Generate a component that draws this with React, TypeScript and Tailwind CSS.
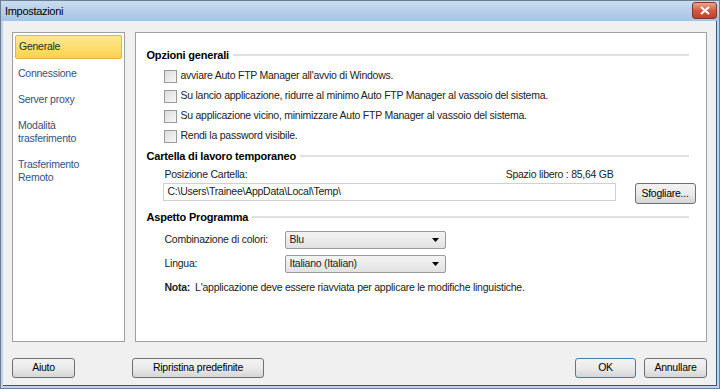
import React from "react";

const font = { fontFamily: '"Liberation Sans", Arial, sans-serif' };

const navItems = [
  { label: "Generale", active: true },
  { label: "Connessione" },
  { label: "Server proxy" },
  { label: "Modalità trasferimento" },
  { label: "Trasferimento Remoto" },
];

const SectionTitle: React.FC<{ title: string }> = ({ title }) => (
  <div className="flex items-center gap-[4px] h-[20px]">
    <span className="font-bold text-[11px] tracking-[-0.2px] text-black">{title}</span>
    <div className="flex-1 h-[2px] bg-[#e0e0e0] mr-[17px]" />
  </div>
);

const Check: React.FC<{ label: string }> = ({ label }) => (
  <div className="flex items-center gap-[4px] h-[20px] pl-[17px]">
    <div className="w-[13px] h-[13px] border border-[#9a9a9a] bg-gradient-to-br from-[#dcdcdc] to-[#f8f8f8]" />
    <span>{label}</span>
  </div>
);

const Button: React.FC<{ label: string; className?: string; focused?: boolean }> = ({
  label,
  className = "",
  focused,
}) => (
  <div
    className={`h-[20px] flex items-center justify-center rounded-[3px] border ${
      focused ? "border-[#3c7fb1]" : "border-[#707070]"
    } bg-gradient-to-b from-[#f2f2f2] via-[#ebebeb] to-[#d5d5d5] text-black ${className}`}
  >
    {label}
  </div>
);

const Select: React.FC<{ value: string }> = ({ value }) => (
  <div className="w-[161px] h-[18px] flex items-center justify-between border border-[#9a9a9a] rounded-[2px] bg-gradient-to-b from-[#f4f4f4] to-[#e2e2e2] pl-[4px] pr-[6px]">
    <span>{value}</span>
    <svg width="7" height="4" viewBox="0 0 7 4">
      <path d="M0 0h7L3.5 4z" fill="#000" />
    </svg>
  </div>
);

export default function App() {
  return (
    <div
      className="w-[720px] h-[389px] flex flex-col bg-[#bcd4ec] border border-[#6b7f94] text-[10.5px] tracking-[-0.25px] text-[#222]"
      style={font}
    >
      <div className="h-[20px] flex items-center justify-between bg-gradient-to-b from-[#cadcf0] to-[#a6c3e4] pl-[4px] pr-[2px]">
        <span className="text-[11px] tracking-[-0.3px] text-black">Impostazioni</span>
        <div className="w-[25px] h-[17px] mb-[2px] rounded-[3px] border border-[#7a3a2e] bg-gradient-to-b from-[#e8a493] via-[#cf5a42] to-[#c0402a] flex items-center justify-center">
          <svg width="10" height="9" viewBox="0 0 10 9">
            <path d="M1 1l8 7M9 1L1 8" stroke="#fff" strokeWidth="2.2" />
          </svg>
        </div>
      </div>
      <div className="flex-1 mx-[2px] mb-[2px] bg-[#f0f0f0] border-r border-b border-[#2e5b78] flex flex-col px-[9px] pt-[11px]">
        <div className="flex gap-[10px] h-[310px]">
          <div className="w-[113px] bg-white border border-[#a0a0a0] p-[2px] flex flex-col">
            {navItems.map((item) => (
              <div
                key={item.label}
                className={
                  item.active
                    ? "h-[24px] flex items-center px-[3px] rounded-[2px] border border-[#e6b53a] bg-gradient-to-b from-[#fde98e] to-[#fbd24e] text-[#2b2b2b] mb-[1px]"
                    : "px-[3px] text-[#34527e] leading-[13px] py-[6.5px] w-[90px]"
                }
              >
                {item.label}
              </div>
            ))}
          </div>
          <div className="w-[575px] bg-white border border-[#a0a0a0] pl-[11px] pt-[12px] flex flex-col">
            <SectionTitle title="Opzioni generali" />
            <div className="flex flex-col pt-[1px]">
              <Check label="avviare Auto FTP Manager all'avvio di Windows." />
              <Check label="Su lancio applicazione, ridurre al minimo Auto FTP Manager al vassoio del sistema." />
              <Check label="Su applicazione vicino, minimizzare Auto FTP Manager al vassoio del sistema." />
              <Check label="Rendi la password visibile." />
            </div>
            <SectionTitle title="Cartella di lavoro temporaneo" />
            <div className="flex items-end gap-[19px] pl-[16px] pt-[1px]">
              <div className="flex flex-col w-[453px]">
                <div className="flex justify-between h-[16px] items-center px-[2px]">
                  <span>Posizione Cartella:</span>
                  <span>Spazio libero : 85,64 GB</span>
                </div>
                <div className="h-[18px] border border-[#d0d0d0] flex items-center pl-[4px]">
                  C:\Users\Trainee\AppData\Local\Temp\
                </div>
              </div>
              <Button label="Sfogliare..." className="w-[61px] h-[21px] -mb-[3px]" />
            </div>
            <div className="h-[6px]" />
            <SectionTitle title="Aspetto Programma" />
            <div className="flex flex-col gap-[6px] pl-[18px] pt-[4px]">
              <div className="flex items-center">
                <span className="w-[120px]">Combinazione di colori:</span>
                <Select value="Blu" />
              </div>
              <div className="flex items-center">
                <span className="w-[120px]">Lingua:</span>
                <Select value="Italiano (Italian)" />
              </div>
              <div className="flex items-center h-[18px] gap-[5px]">
                <span className="font-bold">Nota:</span>
                <span>L'applicazione deve essere riavviata per applicare le modifiche linguistiche.</span>
              </div>
            </div>
          </div>
        </div>
        <div className="flex items-center mt-[16px]">
          <Button label="Aiuto" className="w-[63px]" />
          <Button label="Ripristina predefinite" className="w-[132px] ml-[57px]" />
          <div className="flex-1" />
          <Button label="OK" className="w-[61px]" focused />
          <Button label="Annullare" className="w-[63px] ml-[8px]" />
        </div>
      </div>
    </div>
  );
}
